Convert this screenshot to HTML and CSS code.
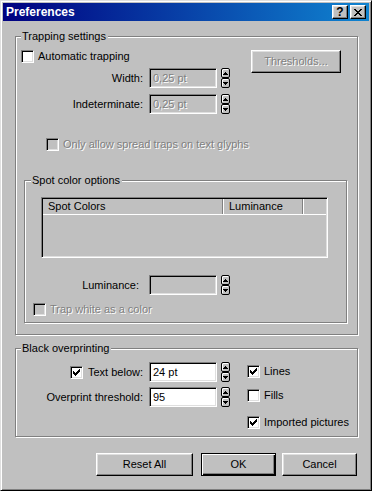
FILE: index.html
```html
<!DOCTYPE html>
<html lang="en">
<head>
	<meta charset="UTF-8">
	<title>Preferences</title>
	<link rel="stylesheet" href="styles.css">
</head>
<body>
<div class="win">
	<div class="title">
		<span class="title-text">Preferences</span>
		<span class="tbtn help">?</span>
		<span class="tbtn close"><svg width="8" height="7" viewBox="0 0 8 7"><path d="M0 0h2v1H0zM6 0h2v1H6zM1 1h2v1H1zM5 1h2v1H5zM2 2h4v1H2zM3 3h2v1H3zM2 4h4v1H2zM1 5h2v1H1zM5 5h2v1H5zM0 6h2v1H0zM6 6h2v1H6z"/></svg></span>
	</div>
	<div class="content">
		<fieldset class="grp trap">
			<legend>Trapping settings</legend>
			<div class="trap-top">
				<div class="trap-left">
					<div class="chk"><span class="cb"></span>Automatic trapping</div>
					<div class="field f1">
						<span class="lbl">Width:</span>
						<span class="inp off">0,25 pt</span>
						<span class="spin"><span class="sb"><svg width="5" height="3"><path d="M2 0h1v1h1v1h1v1H0V2h1V1h1z"/></svg></span><span class="sb"><svg width="5" height="3"><path d="M0 0h5v1H4v1H3v1H2V2H1V1H0z"/></svg></span></span>
					</div>
					<div class="field f2">
						<span class="lbl">Indeterminate:</span>
						<span class="inp off">0,25 pt</span>
						<span class="spin"><span class="sb"><svg width="5" height="3"><path d="M2 0h1v1h1v1h1v1H0V2h1V1h1z"/></svg></span><span class="sb"><svg width="5" height="3"><path d="M0 0h5v1H4v1H3v1H2V2H1V1H0z"/></svg></span></span>
					</div>
				</div>
				<span class="btn off thresholds">Thresholds...</span>
			</div>
			<div class="chk off spread"><span class="cb off"></span>Only allow spread traps on text glyphs</div>

			<fieldset class="grp spot">
				<legend>Spot color options</legend>
				<div class="list">
					<div class="list-head">
						<span class="hcell c1">Spot Colors</span>
						<span class="hcell c2">Luminance</span>
						<span class="hcell c3"></span>
					</div>
				</div>
				<div class="field lum">
					<span class="lbl">Luminance:</span>
					<span class="inp off"></span>
					<span class="spin"><span class="sb"><svg width="5" height="3"><path d="M2 0h1v1h1v1h1v1H0V2h1V1h1z"/></svg></span><span class="sb"><svg width="5" height="3"><path d="M0 0h5v1H4v1H3v1H2V2H1V1H0z"/></svg></span></span>
				</div>
				<div class="chk off white"><span class="cb off"></span>Trap white as a color</div>
			</fieldset>
		</fieldset>

		<fieldset class="grp black">
			<legend>Black overprinting</legend>
			<div class="black-body">
				<div class="black-left">
					<div class="field">
						<span class="lbl lbl-chk"><span class="cb"><svg width="7" height="7"><path d="M0 2h1v3H0zM1 3h1v3H1zM2 4h1v3H2zM3 3h1v3H3zM4 2h1v3H4zM5 1h1v3H5zM6 0h1v3H6z"/></svg></span>Text below:</span>
						<span class="inp">24 pt</span>
						<span class="spin"><span class="sb"><svg width="5" height="3"><path d="M2 0h1v1h1v1h1v1H0V2h1V1h1z"/></svg></span><span class="sb"><svg width="5" height="3"><path d="M0 0h5v1H4v1H3v1H2V2H1V1H0z"/></svg></span></span>
					</div>
					<div class="field f3">
						<span class="lbl">Overprint threshold:</span>
						<span class="inp">95</span>
						<span class="spin"><span class="sb"><svg width="5" height="3"><path d="M2 0h1v1h1v1h1v1H0V2h1V1h1z"/></svg></span><span class="sb"><svg width="5" height="3"><path d="M0 0h5v1H4v1H3v1H2V2H1V1H0z"/></svg></span></span>
					</div>
				</div>
				<div class="black-right">
					<div class="chk lines"><span class="cb"><svg width="7" height="7"><path d="M0 2h1v3H0zM1 3h1v3H1zM2 4h1v3H2zM3 3h1v3H3zM4 2h1v3H4zM5 1h1v3H5zM6 0h1v3H6z"/></svg></span>Lines</div>
					<div class="chk fills"><span class="cb"></span>Fills</div>
					<div class="chk pics"><span class="cb"><svg width="7" height="7"><path d="M0 2h1v3H0zM1 3h1v3H1zM2 4h1v3H2zM3 3h1v3H3zM4 2h1v3H4zM5 1h1v3H5zM6 0h1v3H6z"/></svg></span>Imported pictures</div>
				</div>
			</div>
		</fieldset>

		<div class="buttons">
			<span class="btn reset">Reset All</span>
			<span class="btn def ok">OK</span>
			<span class="btn cancel">Cancel</span>
		</div>
	</div>
</div>
</body>
</html>
```

FILE: styles.css
```css
body{
	margin:0;
	background:#c0c0c0;
	font:11px/13px "Liberation Sans", Arial, sans-serif;
	color:#000;
}
.win{
	width:372px;
	height:491px;
	box-sizing:border-box;
	border:1px solid;
	border-color:#dfdfdf #000 #000 #dfdfdf;
	box-shadow:inset 1px 1px #fff, inset -1px -1px #808080;
	padding:2px;
	background:#c0c0c0;
}
.title{
	height:18px;
	display:flex;
	align-items:center;
	padding:0 3px;
	background:linear-gradient(to right, #000080, #1084d0);
	color:#fff;
}
.title-text{
	flex:1;
	font-weight:bold;
	font-size:12px;
}
.tbtn{
	width:16px;
	height:14px;
	box-sizing:border-box;
	display:flex;
	align-items:center;
	justify-content:center;
	background:#c0c0c0;
	border:1px solid;
	border-color:#fff #000 #000 #fff;
	box-shadow:inset -1px -1px #808080, inset 1px 1px #dfdfdf;
	color:#000;
}
.help{
	margin-right:2px;
	font-weight:bold;
	font-size:12px;
}
.content{
	padding:9px 11px 0 12px;
}

/* group boxes */
.grp{
	margin:0;
	min-width:0;
	border:1px solid #808080;
	box-shadow:1px 1px 0 #fff, inset 1px 1px 0 #fff;
}
legend{
	padding:0 2px 0 1px;
	background:#c0c0c0;
	line-height:13px;
}
.trap{
	padding:0 0 11px 5px;
}
.trap-top{
	display:flex;
	align-items:flex-start;
	margin-top:7px;
}
.trap-left{
	flex:1;
}
.thresholds{
	width:90px;
	margin-right:16px;
}

/* checkboxes */
.chk{
	display:flex;
	align-items:center;
	gap:4px;
	height:13px;
}
.cb{
	width:13px;
	height:13px;
	box-sizing:border-box;
	display:flex;
	align-items:center;
	justify-content:center;
	flex:none;
	background:#fff;
	border:1px solid;
	border-color:#808080 #fff #fff #808080;
	box-shadow:inset 1px 1px #000, inset -1px -1px #dfdfdf;
}
.cb.off{
	background:#c0c0c0;
}
.off{
	color:#808080;
	text-shadow:1px 1px 0 #fff;
}
.spread{
	margin:24px 0 0 25px;
}

/* label, edit box, spinner */
.field{
	display:flex;
	align-items:center;
	height:20px;
}
.f1{
	margin-top:5px;
}
.f2{
	margin-top:6px;
}
.f3{
	margin-top:5px;
}
.lbl{
	width:122px;
	margin-right:6px;
	text-align:right;
}
.lbl-chk{
	display:flex;
	justify-content:flex-end;
	align-items:center;
	gap:5px;
}
.inp{
	width:68px;
	height:20px;
	box-sizing:border-box;
	display:flex;
	align-items:center;
	padding:0 3px;
	background:#fff;
	border:1px solid;
	border-color:#808080 #fff #fff #808080;
	box-shadow:inset 1px 1px #000, inset -1px -1px #dfdfdf;
}
.inp.off{
	background:#c0c0c0;
}
.spin{
	display:flex;
	flex-direction:column;
	margin-left:4px;
}
.sb{
	width:9px;
	height:10px;
	box-sizing:border-box;
	display:flex;
	align-items:center;
	justify-content:center;
	background:#c0c0c0;
	border:1px solid #000;
	border-radius:2px;
	box-shadow:inset 1px 1px #fff;
}

/* spot colors */
.spot{
	margin:23px 10px 0 3px;
	padding:0 0 6px 6px;
}
.list{
	width:287px;
	height:61px;
	box-sizing:border-box;
	margin:10px 0 0 10px;
	background:#c0c0c0;
	border:1px solid;
	border-color:#808080 #fff #fff #808080;
	box-shadow:inset 1px 1px #000, inset -1px -1px #dfdfdf;
	padding:1px 1px 0 1px;
}
.list-head{
	display:flex;
	height:16px;
	box-sizing:border-box;
	border-bottom:1px solid #fff;
}
.hcell{
	box-sizing:border-box;
	padding-left:5px;
	line-height:15px;
	border-right:1px solid #808080;
	border-left:1px solid #fff;
}
.c1{
	width:180px;
	border-left:none;
	padding-left:5px;
}
.c2{
	width:80px;
}
.c3{
	flex:1;
	border-right:none;
}
.lum{
	margin-top:17px;
}
.lum .lbl{
	width:108px;
	margin-right:10px;
}
.white{
	margin:8px 0 0 2px;
}

/* black overprinting */
.black{
	margin-top:7px;
	padding:0 0 7px 5px;
}
.black-body{
	display:flex;
	margin-top:7px;
}
.black-right{
	margin-left:17px;
}
.lines{
	margin-top:3px;
}
.fills{
	margin-top:11px;
}
.pics{
	margin-top:14px;
}

/* buttons */
.btn{
	height:23px;
	box-sizing:border-box;
	display:flex;
	align-items:center;
	justify-content:center;
	background:#c0c0c0;
	border:1px solid;
	border-color:#fff #000 #000 #fff;
	box-shadow:inset -1px -1px #808080, inset 1px 1px #dfdfdf;
}
.btn.def{
	border-color:#000;
	box-shadow:inset 1px 1px #fff, inset -1px -1px #000, inset -2px -2px #808080;
}
.buttons{
	display:flex;
	justify-content:flex-end;
	margin:16px 1px 0 0;
}
.reset{
	width:97px;
	margin-right:8px;
}
.ok{
	width:75px;
	margin-right:6px;
}
.cancel{
	width:75px;
}
```
